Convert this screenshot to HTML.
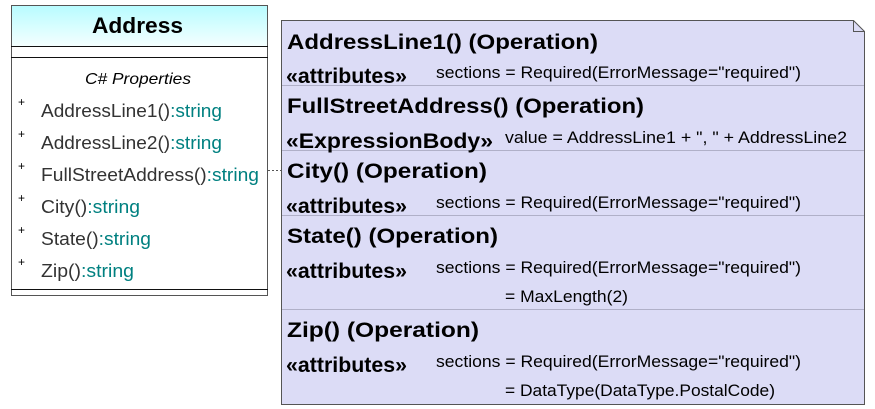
<!DOCTYPE html>
<html><head><meta charset="utf-8"><style>
html,body{margin:0;padding:0;background:#fff;width:875px;height:409px;overflow:hidden}
svg{display:block}
text{font-family:"Liberation Sans",sans-serif}
</style></head><body>
<svg width="875" height="409" viewBox="0 0 875 409" xmlns="http://www.w3.org/2000/svg">
<defs><linearGradient id="g" x1="0" y1="0" x2="0" y2="1"><stop offset="0" stop-color="#b8fcff"/><stop offset="1" stop-color="#f4ffff"/></linearGradient></defs>
<rect x="11.5" y="5.5" width="256" height="290" fill="#fff" stroke="#555"/>
<rect x="12" y="6" width="255" height="40" fill="url(#g)"/>
<line x1="11" y1="46.5" x2="268" y2="46.5" stroke="#111"/>
<line x1="11" y1="57.5" x2="268" y2="57.5" stroke="#111"/>
<line x1="11" y1="289.5" x2="268" y2="289.5" stroke="#111"/>
<text x="92" y="33" font-size="22" font-weight="bold" textLength="91" lengthAdjust="spacingAndGlyphs">Address</text>
<text x="85" y="84" font-size="16" font-style="italic" textLength="106" lengthAdjust="spacingAndGlyphs">C# Properties</text>
<g font-size="12" fill="#000">
<text x="18" y="106">+</text><text x="18" y="138">+</text><text x="18" y="170">+</text><text x="18" y="202">+</text><text x="18" y="234">+</text><text x="18" y="266">+</text>
</g>
<g font-size="18.5">
<text x="41" y="117" textLength="181" lengthAdjust="spacingAndGlyphs"><tspan fill="#333">AddressLine1()</tspan><tspan fill="#008080">:string</tspan></text>
<text x="41" y="149" textLength="181" lengthAdjust="spacingAndGlyphs"><tspan fill="#333">AddressLine2()</tspan><tspan fill="#008080">:string</tspan></text>
<text x="41" y="181" textLength="218" lengthAdjust="spacingAndGlyphs"><tspan fill="#333">FullStreetAddress()</tspan><tspan fill="#008080">:string</tspan></text>
<text x="41" y="213" textLength="99" lengthAdjust="spacingAndGlyphs"><tspan fill="#333">City()</tspan><tspan fill="#008080">:string</tspan></text>
<text x="41" y="245" textLength="110" lengthAdjust="spacingAndGlyphs"><tspan fill="#333">State()</tspan><tspan fill="#008080">:string</tspan></text>
<text x="41" y="277" textLength="93" lengthAdjust="spacingAndGlyphs"><tspan fill="#333">Zip()</tspan><tspan fill="#008080">:string</tspan></text>
</g>
<line x1="268" y1="170.5" x2="281" y2="170.5" stroke="#555" stroke-dasharray="2,2"/>
<path d="M281.5 20.5 H853.5 L864.5 31.5 V404.5 H281.5 Z" fill="#dcdcf6" stroke="#555"/>
<path d="M853.5 20.5 V31.5 H864.5" fill="none" stroke="#555"/>
<g stroke="#b0b0c8"><line x1="282" y1="85.5" x2="864" y2="85.5"/><line x1="282" y1="150.5" x2="864" y2="150.5"/><line x1="282" y1="215.5" x2="864" y2="215.5"/><line x1="282" y1="309.5" x2="864" y2="309.5"/></g>
<g font-size="21" font-weight="bold" fill="#000">
<text x="287" y="49" textLength="311" lengthAdjust="spacingAndGlyphs">AddressLine1() (Operation)</text>
<text x="287" y="113" textLength="357" lengthAdjust="spacingAndGlyphs">FullStreetAddress() (Operation)</text>
<text x="287" y="178" textLength="200" lengthAdjust="spacingAndGlyphs">City() (Operation)</text>
<text x="287" y="243" textLength="211" lengthAdjust="spacingAndGlyphs">State() (Operation)</text>
<text x="287" y="337" textLength="192" lengthAdjust="spacingAndGlyphs">Zip() (Operation)</text>
<text x="286" y="83" textLength="121" lengthAdjust="spacingAndGlyphs">«attributes»</text>
<text x="286" y="148" textLength="207" lengthAdjust="spacingAndGlyphs">«ExpressionBody»</text>
<text x="286" y="213" textLength="121" lengthAdjust="spacingAndGlyphs">«attributes»</text>
<text x="286" y="278" textLength="121" lengthAdjust="spacingAndGlyphs">«attributes»</text>
<text x="286" y="372" textLength="121" lengthAdjust="spacingAndGlyphs">«attributes»</text>
</g>
<g font-size="17" fill="#000">
<text x="436" y="78" textLength="365" lengthAdjust="spacingAndGlyphs">sections = Required(ErrorMessage="required")</text>
<text x="505" y="143" textLength="342" lengthAdjust="spacingAndGlyphs">value = AddressLine1 + ", " + AddressLine2</text>
<text x="436" y="208" textLength="365" lengthAdjust="spacingAndGlyphs">sections = Required(ErrorMessage="required")</text>
<text x="436" y="273" textLength="365" lengthAdjust="spacingAndGlyphs">sections = Required(ErrorMessage="required")</text>
<text x="505" y="302" textLength="123" lengthAdjust="spacingAndGlyphs">= MaxLength(2)</text>
<text x="436" y="367" textLength="365" lengthAdjust="spacingAndGlyphs">sections = Required(ErrorMessage="required")</text>
<text x="505" y="396" textLength="270" lengthAdjust="spacingAndGlyphs">= DataType(DataType.PostalCode)</text>
</g>
</svg>
</body></html>
